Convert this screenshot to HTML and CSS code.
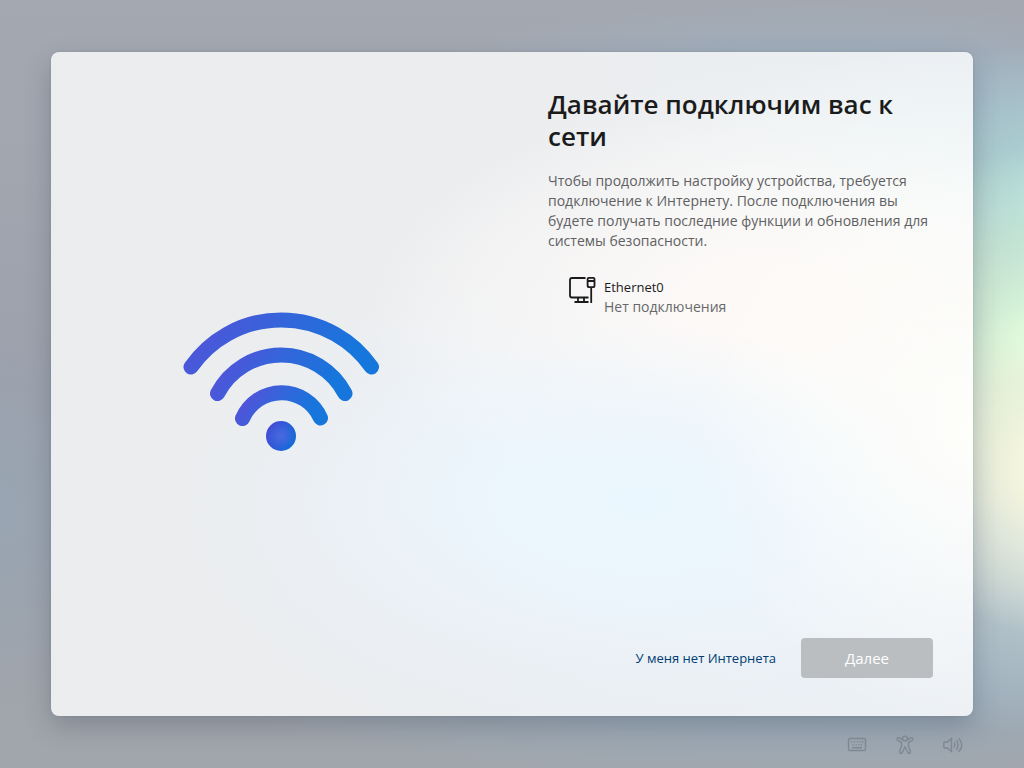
FILE: index.html
```html
<!DOCTYPE html>
<html lang="ru">
<head>
<meta charset="utf-8">
<meta name="viewport" content="width=device-width, initial-scale=1">
<title>Подключение к сети</title>
<link rel="stylesheet" href="styles.css">
</head>
<body class="screen">
<main class="card">
  <div class="hero">
    <svg class="wifi" viewBox="0 0 204 152" aria-hidden="true">
      <defs>
        <linearGradient id="arc" x1="0" y1="0" x2="1" y2="0.2">
          <stop offset="0" stop-color="#5551d8"/>
          <stop offset="0.5" stop-color="#3465db"/>
          <stop offset="1" stop-color="#1676dc"/>
        </linearGradient>
        <radialGradient id="glow">
          <stop offset="0" stop-color="#4a6ae0"/>
          <stop offset="1" stop-color="#4a6ae0" stop-opacity="0"/>
        </radialGradient>
        <linearGradient id="dot" x1="0" y1="0.2" x2="1" y2="0.7">
          <stop offset="0" stop-color="#4a47d6"/>
          <stop offset="1" stop-color="#0f6ed8"/>
        </linearGradient>
      </defs>
      <g fill="none" stroke="url(#arc)" stroke-width="15" stroke-linecap="round">
        <path d="M11 59A110 110 0 0 1 191.500 59"/>
        <path d="M37.500 85.500A72 72 0 0 1 165 85.500"/>
        <path d="M62.500 110.500A42.500 42.500 0 0 1 140.500 110"/>
      </g>
      <circle cx="101" cy="128" r="15" fill="url(#dot)"/>
      <circle cx="101" cy="128" r="14" fill="url(#glow)"/>
    </svg>
  </div>
  <section class="content">
    <h1 class="title">Давайте подключим вас к сети</h1>
    <p class="lead">Чтобы продолжить настройку устройства, требуется подключение к Интернету. После подключения вы будете получать последние функции и обновления для системы безопасности.</p>
    <ul class="networks">
      <li class="network">
        <svg class="network-icon" viewBox="0 0 28 28" aria-hidden="true">
          <g fill="none" stroke="#1b1b1b" stroke-width="1.8">
            <path d="M17.500 2H4Q2 2 2 4V19.500Q2 21.500 4 21.500H20.500"/>
            <path d="M10 21.500V26M16 21.500V26M6.500 26H20.500"/>
            <path d="M20.800 1.800H25.200Q26.500 1.800 26.500 3V9.500Q26.500 11.200 25 11.200H21.200Q19.600 11.200 19.600 9.500V3Q19.600 1.800 20.800 1.800ZM20 5H26M23.200 11V27"/>
          </g>
        </svg>
        <div class="network-text">
          <span class="network-name">Ethernet0</span>
          <span class="network-status">Нет подключения</span>
        </div>
      </li>
    </ul>
    <div class="actions">
      <a class="skip" href="#">У меня нет Интернета</a>
      <button class="next" type="button" disabled>Далее</button>
    </div>
  </section>
</main>
<footer class="tools">
  <button class="tool" type="button" aria-label="Клавиатура">
    <svg viewBox="0 0 20 20"><rect x="1.500" y="3.500" width="17" height="12" rx="1.500"/><path d="M4 6.800h1.200M7 6.800h1.200M10 6.800h1.200M13 6.800h1.200M15.200 6.800h1.200M5.500 9.800h1.200M8.500 9.800h1.200M11.500 9.800h1.200M14 9.800h1.200M5 12.800h10"/></svg>
  </button>
  <button class="tool" type="button" aria-label="Специальные возможности">
    <svg viewBox="0 0 20 20"><circle cx="10" cy="3.500" r="2.400"/><path d="M7.500 4.500 4.500 3Q2.500 2.300 2 4 2 5 3 5.600L6.500 7.300V11L4.500 16.700Q4.300 18.400 5.800 18.600 6.800 18.600 7.200 17.500L10 12 12.800 17.500Q13.200 18.600 14.200 18.600 15.700 18.400 15.500 16.700L13.500 11V7.300L17 5.600Q18 5 18 4 17.500 2.300 15.500 3L12.500 4.500"/></svg>
  </button>
  <button class="tool" type="button" aria-label="Громкость">
    <svg viewBox="0 0 20 20"><path d="M8.500 3.500 4.500 7H2Q.800 7 .800 8.200V11.800Q.800 13 2 13H4.500L8.500 16.500ZM11 7.500Q12.600 10 11 12.500M13.300 5.300Q16.900 10 13.300 14.700M15.600 3.200Q22 10 15.600 16.800"/></svg>
  </button>
</footer>
</body>
</html>
```
FILE: styles.css
```css
*, *::before, *::after { box-sizing: border-box; }

.screen {
  margin: 0;
  min-height: 100vh;
  padding: 52px 51px 0;
  display: flex;
  flex-direction: column;
  font-family: "Open Sans", "Noto Sans", sans-serif;
  color: #1b1b1b;
  background:
    radial-gradient(ellipse 180px 170px at 104% 61%, #fbf9df 15%, rgba(240, 242, 222, 0) 100%),
    radial-gradient(ellipse 240px 190px at 103% 44%, #d8f8da 15%, rgba(205, 235, 220, 0) 100%),
    radial-gradient(ellipse 200px 150px at 103% 25%, #afdfdf, rgba(168, 195, 208, 0) 100%),
    radial-gradient(ellipse 240px 200px at 103% 70%, #c3d9de, rgba(165, 185, 198, 0) 100%),
    radial-gradient(ellipse 420px 90px at 80% 12%, rgba(158, 180, 200, 0.9), rgba(160, 175, 190, 0) 100%),
    radial-gradient(ellipse 560px 100px at 76% 89%, rgba(150, 172, 190, 0.9), rgba(158, 170, 184, 0) 100%),
    radial-gradient(ellipse 120px 190px at 0 66%, #98a5b2, rgba(154, 162, 174, 0) 100%),
    linear-gradient(#a4a9b1, #9da1ac 50%, #a1a6ac);
}

.card {
  flex: 1;
  display: grid;
  grid-template-columns: 1fr 1fr;
  border-radius: 8px;
  box-shadow: 0 10px 26px rgba(50, 62, 78, 0.28), 0 0 2px rgba(60, 70, 85, 0.2);
  background:
    radial-gradient(ellipse 30% 44% at 100% 58%, #fefefb, rgba(254, 254, 251, 0) 100%),
    radial-gradient(ellipse 38% 26% at 64% 67%, #ebf7fe, rgba(238, 246, 253, 0) 100%),
    radial-gradient(ellipse 46% 32% at 80% 39%, #fdf9f7 15%, rgba(244, 240, 242, 0) 100%),
    radial-gradient(ellipse 40% 28% at 100% 27%, #f2fbfb, rgba(240, 247, 249, 0) 100%),
    radial-gradient(ellipse 56% 38% at 66% 69%, #ebf3fb 20%, rgba(234, 238, 244, 0) 100%),
    radial-gradient(ellipse 54% 48% at 85% 48%, #f8f9f9, rgba(240, 242, 244, 0) 100%),
    linear-gradient(100deg, #ecedee, #ebedef 50%, #ecf0f4);
}

.hero {
  display: flex;
  align-items: center;
  justify-content: center;
}

.wifi { width: 204px; height: 152px; }

.content {
  display: flex;
  flex-direction: column;
  padding: 36px 40px 38px 36px;
}

.title {
  margin: 0;
  font-size: 26px;
  line-height: 32px;
  font-weight: 600;
}

.lead {
  margin: 19px 0 0;
  font-size: 14px;
  line-height: 20px;
  color: #5f6062;
}

.networks {
  margin: 25px 0 0;
  padding: 0 20px;
  list-style: none;
}

.network {
  display: flex;
  gap: 8px;
}

.network-icon { width: 28px; height: 28px; }

.network-text {
  display: flex;
  flex-direction: column;
  padding-top: 1px;
  line-height: 20px;
}

.network-name { font-size: 13px; }
.network-status { font-size: 14px; color: #68686a; }

.actions {
  margin-top: auto;
  display: flex;
  align-items: center;
  justify-content: flex-end;
  gap: 25px;
}

.skip {
  font-size: 13px;
  line-height: 20px;
  color: #003e73;
  text-decoration: none;
}

.next {
  width: 132px;
  height: 40px;
  padding: 0;
  border: 0;
  border-radius: 4px;
  font: 15px/20px "Open Sans", "Noto Sans", sans-serif;
  color: #fff;
  background: #babec1;
}

.tools {
  display: flex;
  justify-content: flex-end;
  gap: 28px;
  padding: 19px 0 13px;
  margin-right: 10px;
}

.tool {
  width: 20px;
  height: 20px;
  padding: 0;
  border: 0;
  background: none;
}

.tool svg {
  display: block;
  width: 20px;
  height: 20px;
  fill: none;
  stroke: #7d8892;
  stroke-width: 1.4;
}
```
